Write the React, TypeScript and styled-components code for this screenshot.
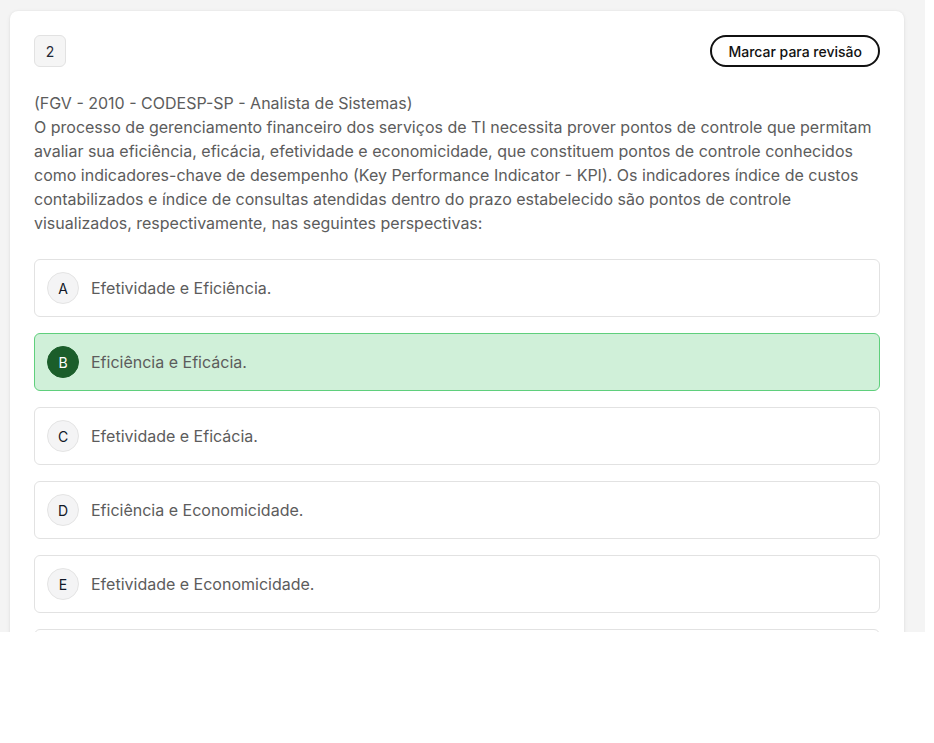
import React from 'react';
import styled, { createGlobalStyle } from 'styled-components';

const GlobalStyle = createGlobalStyle`
  * { box-sizing: border-box; }
  body {
    margin: 0;
    background: #ffffff;
    font-family: Inter, "Noto Sans", sans-serif;
  }
`;

const Viewport = styled.div`
  width: 925px;
  height: 632px;
  overflow: hidden;
  background: #f4f4f4;
  padding: 11px 0 0 10px;
`;

const Card = styled.div`
  width: 894px;
  background: #fff;
  border-radius: 8px;
  box-shadow: 0 1px 4px rgba(0, 0, 0, 0.08), 0 0 2px rgba(0, 0, 0, 0.05);
  padding: 24px;
`;

const TopRow = styled.div`
  display: flex;
  align-items: center;
  justify-content: space-between;
`;

const NumberBadge = styled.div`
  width: 32px;
  height: 32px;
  border-radius: 6px;
  border: 1px solid #e2e2e2;
  background: #f5f5f5;
  display: flex;
  align-items: center;
  justify-content: center;
  font-size: 14px;
  color: #1f2937;
`;

const ReviewButton = styled.button`
  height: 32px;
  padding: 0 16px;
  border: 2px solid #111;
  border-radius: 999px;
  background: #fff;
  font-family: Inter, sans-serif;
  font-size: 14px;
  font-weight: 500;
  color: #111;
  cursor: pointer;
`;

const Statement = styled.p`
  margin: 24px 0;
  font-size: 16px;
  line-height: 24px;
  color: #5c5c5c;
`;

const Options = styled.div`
  display: flex;
  flex-direction: column;
  gap: 16px;
`;

const Option = styled.div<{ $selected?: boolean }>`
  height: 58px;
  display: flex;
  align-items: center;
  gap: 12px;
  padding: 0 12px;
  border-radius: 6px;
  border: 1px solid ${(p) => (p.$selected ? '#5fcf7c' : '#e2e2e2')};
  background: ${(p) => (p.$selected ? '#d0f0d9' : '#fff')};
`;

const Letter = styled.span<{ $selected?: boolean }>`
  width: 32px;
  height: 32px;
  border-radius: 50%;
  flex-shrink: 0;
  display: flex;
  align-items: center;
  justify-content: center;
  font-size: 14px;
  font-weight: 400;
  color: ${(p) => (p.$selected ? '#fff' : '#111827')};
  background: ${(p) => (p.$selected ? '#1b5e2b' : '#f4f4f5')};
  border: 1px solid ${(p) => (p.$selected ? '#1b5e2b' : '#e4e4e4')};
`;

const OptionText = styled.span`
  font-size: 16px;
  color: #5c5c5c;
`;

const options = [
  { letter: 'A', text: 'Efetividade e Eficiência.' },
  { letter: 'B', text: 'Eficiência e Eficácia.', selected: true },
  { letter: 'C', text: 'Efetividade e Eficácia.' },
  { letter: 'D', text: 'Eficiência e Economicidade.' },
  { letter: 'E', text: 'Efetividade e Economicidade.' },
];

const App = () => {
  return (
    <>
      <GlobalStyle />
      <Viewport>
        <Card>
          <TopRow>
            <NumberBadge>2</NumberBadge>
            <ReviewButton>Marcar para revisão</ReviewButton>
          </TopRow>
          <Statement>
            (FGV - 2010 - CODESP-SP - Analista de Sistemas)
            <br />
            O processo de gerenciamento financeiro dos serviços de TI necessita prover pontos de controle que permitam
            avaliar sua eficiência, eficácia, efetividade e economicidade, que constituem pontos de controle conhecidos
            como indicadores-chave de desempenho (Key Performance Indicator - KPI). Os indicadores índice de custos
            contabilizados e índice de consultas atendidas dentro do prazo estabelecido são pontos de controle
            visualizados, respectivamente, nas seguintes perspectivas:
          </Statement>
          <Options>
            {options.map((o) => (
              <Option key={o.letter} $selected={o.selected}>
                <Letter $selected={o.selected}>{o.letter}</Letter>
                <OptionText>{o.text}</OptionText>
              </Option>
            ))}
            <Option />
          </Options>
        </Card>
      </Viewport>
    </>
  );
};

export default App;
